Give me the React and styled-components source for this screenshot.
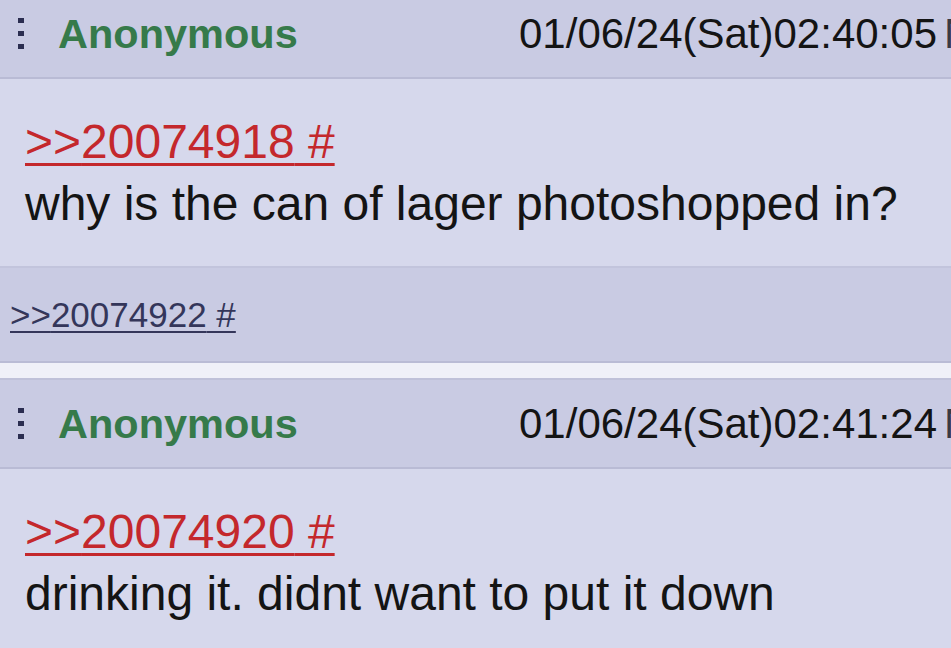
import React from 'react'
import styled, { createGlobalStyle } from 'styled-components'

const Global = createGlobalStyle`
  html, body {
    margin: 0;
    padding: 0;
    background: #d6d8ec;
    overflow: hidden;
  }
  body {
    font-family: "Liberation Sans", Arial, sans-serif;
  }
`

const Thread = styled.div`
  margin-top: -10px;
  width: 951px;
  overflow: hidden;
`

const Header = styled.div`
  height: 87px;
  display: flex;
  align-items: center;
  background: #c9cbe3;
  border-bottom: 2px solid #b9bbd5;
  white-space: nowrap;
  overflow: hidden;
`

const Dots = styled.div`
  display: flex;
  flex-direction: column;
  gap: 8px;
  margin-left: 18px;
  width: 6px;
  flex-shrink: 0;

  span {
    width: 6px;
    height: 5px;
    background: #2b2d50;
  }
`

const Name = styled.span`
  flex: 0 0 461px;
  margin-left: 34px;
  font-size: 41.5px;
  font-weight: bold;
  color: #367a4a;
`

const Stamp = styled.span`
  font-size: 42px;
  color: #141414;
`

const PostNo = styled.span`
  margin-left: 7px;
  font-size: 42px;
  color: #3a3a44;
`

const Body = styled.div`
  padding: 32px 25px 31px;
  font-size: 48px;
  line-height: 62px;
  color: #141414;
  background: #d6d8ec;
  border-bottom: 2px solid #c2c4dc;
`

const Quote = styled.a`
  display: inline-block;
  color: ${p => p.$dim ? '#34365a' : '#c4282c'};
  text-decoration: underline;
  text-decoration-thickness: 3px;
  text-underline-offset: 5px;
`

const Replies = styled.div`
  height: 93px;
  display: flex;
  align-items: center;
  padding-left: 10px;
  font-size: 35px;
  background: #c9cbe3;
  border-bottom: 2px solid #b9bbd5;

  ${Quote} {
    text-decoration-thickness: 2px;
    text-underline-offset: 4px;
  }
`

const Gap = styled.div`
  height: 15px;
  background: #eff0f8;
  border-bottom: 2px solid #bfc1d9;
`

const Post = ({ date, no, quote, text, replies }) => (
  <>
    <Header>
      <Dots><span /><span /><span /></Dots>
      <Name>Anonymous</Name>
      <Stamp>{date}</Stamp>
      <PostNo>No.{no}</PostNo>
    </Header>
    <Body>
      <Quote href="#">&gt;&gt;{quote} #</Quote>
      <div>{text}</div>
    </Body>
    {replies && (
      <Replies>
        <Quote href="#" $dim>&gt;&gt;{replies} #</Quote>
      </Replies>
    )}
  </>
)

export default function App() {
  return (
    <Thread>
      <Global />
      <Post
        date="01/06/24(Sat)02:40:05"
        no="20074920"
        quote="20074918"
        text="why is the can of lager photoshopped in?"
        replies="20074922"
      />
      <Gap />
      <Post
        date="01/06/24(Sat)02:41:24"
        no="20074922"
        quote="20074920"
        text="drinking it. didnt want to put it down"
      />
    </Thread>
  )
}
